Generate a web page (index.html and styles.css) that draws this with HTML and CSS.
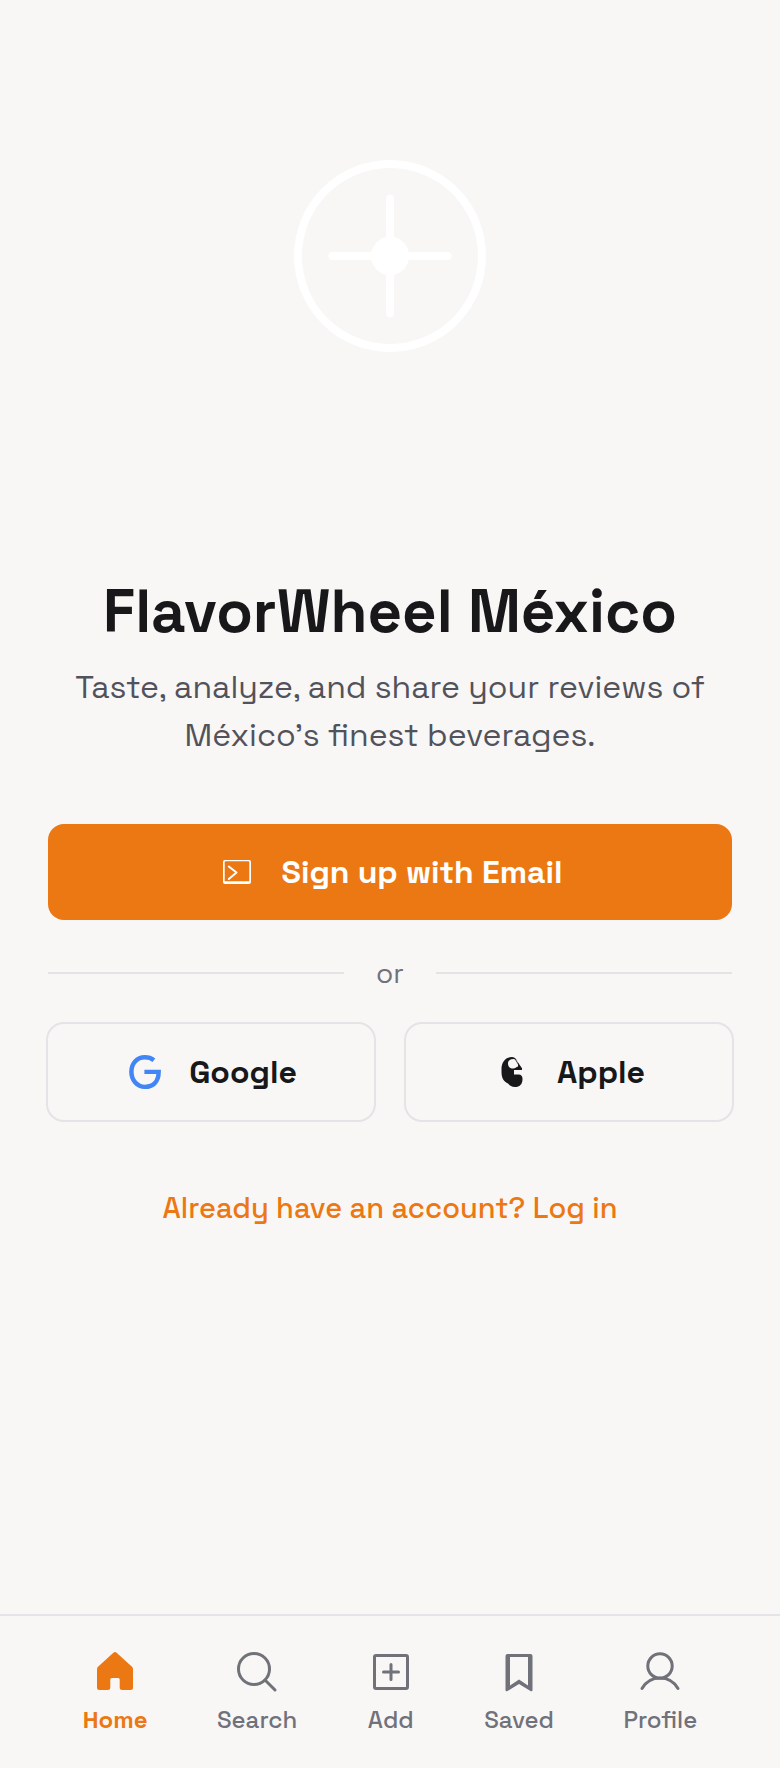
FILE: index.html
```html
<!DOCTYPE html>
<html lang="en">
<head>
<meta charset="utf-8">
<meta name="viewport" content="width=device-width, initial-scale=1">
<title>FlavorWheel México</title>
<link rel="stylesheet" href="styles.css">
</head>
<body>
<div class="screen">
  <main class="welcome">
    <svg class="logo" viewBox="0 0 192 192" aria-hidden="true">
      <circle cx="96" cy="96" r="92" fill="none" stroke="#fff" stroke-width="8"/>
      <path d="M96 38.500V153.500M38.500 96H153.500" stroke="#fff" stroke-width="8" stroke-linecap="round"/>
      <circle cx="96" cy="96" r="19.200" fill="#fff"/>
    </svg>
    <h1 class="title">FlavorWheel México</h1>
    <p class="tagline">Taste, analyze, and share your reviews of México’s finest beverages.</p>
    <button class="button button-primary" type="button">
      <svg class="button-icon" viewBox="0 0 40 40" fill="none" stroke="currentColor" aria-hidden="true">
        <path fill="currentColor" fill-rule="evenodd" stroke="none" d="M8 8H32Q34 8 34 10V30Q34 32 32 32H8Q6 32 6 30V10Q6 8 8 8ZM8.500 9.300Q7.700 9.300 7.700 10V28.500Q7.700 29.300 8.500 29.300H31.500Q32.300 29.300 32.300 28.500V10Q32.300 9.300 31.500 9.300Z"/>
        <path d="M11.800 14.500L19.500 20.500L11.800 27" stroke-width="2" stroke-linecap="round" stroke-linejoin="round"/>
      </svg>
      <span>Sign up with Email</span>
    </button>
    <div class="divider"><span>or</span></div>
    <div class="socials">
      <button class="button button-outline" type="button">
        <svg class="button-icon" viewBox="0 0 40 40" fill="none" aria-hidden="true">
          <path d="M30 8.500C27.300 6.300 24.100 5.400 20.400 5.400C12 5.400 6.300 12 6.300 20.500C6.300 29.500 12.500 36.500 20.500 36.500C29 36.500 35 31.200 35 20.700H20" transform="translate(.4 .2) scale(.95)" stroke="#4285f4" stroke-width="4.700"/>
        </svg>
        <span>Google</span>
      </button>
      <button class="button button-outline" type="button">
        <svg class="button-icon" viewBox="0 0 40 40" aria-hidden="true">
          <path fill="currentColor" fill-rule="evenodd" d="M19 5C22 5 24 7.500 25 10.500L29 16.200V18H21V22.500H25.500Q29.500 22.500 29.500 27C29.500 32.500 26.500 35 22 35C18.500 35 17 33.500 15 31.500C11 29.500 8.500 26.500 8.500 20V17C8.500 10 12.500 5 19 5ZM20.500 7C17 7 15 8.500 15 11.500C15 14.500 17 16.500 20 16.500C22.500 16.500 23 15 25 14.500C25.500 11 24.500 7 20.500 7Z"/>
          <path d="M22.200 7L26 13.500" stroke="currentColor" stroke-width=".8"/>
        </svg>
        <span>Apple</span>
      </button>
    </div>
    <a class="login" href="#login">Already have an account? Log in</a>
  </main>
  <nav class="tabs" aria-label="Main">
    <a class="tab tab-active" href="#home" aria-current="page">
      <svg class="tab-icon" viewBox="0 0 48 48" aria-hidden="true">
        <path fill="currentColor" d="M22.400 4.700Q24 3.300 25.600 4.700L41 18.700Q42 19.700 42 21V39.500Q42 42 39.500 42H31.500Q28.700 42 28.700 39.500V31.500Q28.700 30 27.200 30H20.800Q19.300 30 19.300 31.500V39.500Q19.300 42 16.500 42H8.500Q6 42 6 39.500V21Q6 19.700 7 18.700Z"/>
      </svg>
      <span>Home</span>
    </a>
    <a class="tab" href="#search">
      <svg class="tab-icon" viewBox="0 0 48 48" fill="none" stroke="currentColor" stroke-width="3" stroke-linecap="round" aria-hidden="true">
        <circle cx="21" cy="21" r="15.500"/><path d="M32 32L42 42"/>
      </svg>
      <span>Search</span>
    </a>
    <a class="tab" href="#add">
      <svg class="tab-icon" viewBox="0 0 48 48" fill="none" stroke="currentColor" stroke-width="3" stroke-linecap="round" aria-hidden="true">
        <rect x="7.500" y="7.500" width="33" height="33" rx="1.500"/><path d="M24 16.500V31.500M16.500 24H31.500"/>
      </svg>
      <span>Add</span>
    </a>
    <a class="tab" href="#saved">
      <svg class="tab-icon" viewBox="0 0 48 48" aria-hidden="true">
        <path fill="currentColor" fill-rule="evenodd" d="M12.500 6H35.500Q37.500 6 37.500 8V42Q37.500 44 35.500 43L24 36L12.500 43Q10.500 44 10.500 42V8Q10.500 6 12.500 6ZM15 9V37.500L24 31.500L33 37.500V9Z"/>
      </svg>
      <span>Saved</span>
    </a>
    <a class="tab" href="#profile">
      <svg class="tab-icon" viewBox="0 0 48 48" fill="none" stroke="currentColor" stroke-width="3" stroke-linecap="round" aria-hidden="true">
        <circle cx="24" cy="18" r="12.200"/><path d="M6 40.500C9.600 34.200 16.200 30 24 30S38.400 34.200 42 40.500"/>
      </svg>
      <span>Profile</span>
    </a>
  </nav>
</div>
</body>
</html>
```

FILE: styles.css
```css
* {
  box-sizing: border-box;
}

body {
  margin: 0;
  background: #f8f7f6;
  color: #18181b;
  font-family: "Space Grotesk", Inter, "Liberation Sans", sans-serif;
}

.screen {
  display: flex;
  flex-direction: column;
  min-height: 100vh;
}

.welcome {
  flex: 1;
  display: flex;
  flex-direction: column;
  align-items: center;
  padding: 160px 48px 48px;
}

.logo {
  width: 192px;
  height: 192px;
  margin-bottom: 224px;
}

.title {
  margin: 0 0 15px;
  font-size: 60px;
  line-height: 72px;
  font-weight: 700;
  text-align: center;
}

.tagline {
  max-width: 652px;
  margin: 0 0 65px;
  color: #52525b;
  font-size: 32px;
  line-height: 48px;
  text-align: center;
}

.button {
  display: flex;
  align-items: center;
  justify-content: center;
  gap: 24px;
  height: 96px;
  padding: 0 32px;
  border: 0;
  border-radius: 16px;
  background: transparent;
  color: #18181b;
  font: inherit;
  font-size: 32px;
  line-height: 40px;
  font-weight: 700;
  cursor: pointer;
}

.button-primary {
  width: 100%;
  background: #ec7813;
  color: #fff;
}

.button-outline {
  flex: 1;
  box-shadow: 0 0 0 2px #e4e4e7;
}

.button-icon {
  flex: none;
  width: 40px;
  height: 40px;
}

.divider {
  display: flex;
  align-items: center;
  gap: 32px;
  width: 100%;
  margin: 32px 0 30px;
  color: #71717a;
  font-size: 28px;
  line-height: 42px;
}

.divider::before,
.divider::after {
  content: "";
  flex: 1;
  height: 2px;
  background: #e4e4e7;
}

.socials {
  display: flex;
  gap: 32px;
  width: 100%;
  margin-bottom: 67px;
}

.login {
  color: #ec7813;
  font-size: 29px;
  line-height: 42px;
  font-weight: 500;
  text-decoration: none;
}

.tabs {
  display: flex;
  justify-content: space-around;
  padding: 32px 48px;
  border-top: 2px solid #e4e4e7;
}

.tab {
  display: flex;
  flex-direction: column;
  align-items: center;
  gap: 8px;
  color: #71717a;
  font-size: 24px;
  line-height: 32px;
  font-weight: 500;
  text-decoration: none;
}

.tab-active {
  color: #ec7813;
  font-weight: 700;
}

.tab-icon {
  width: 48px;
  height: 48px;
}
```
